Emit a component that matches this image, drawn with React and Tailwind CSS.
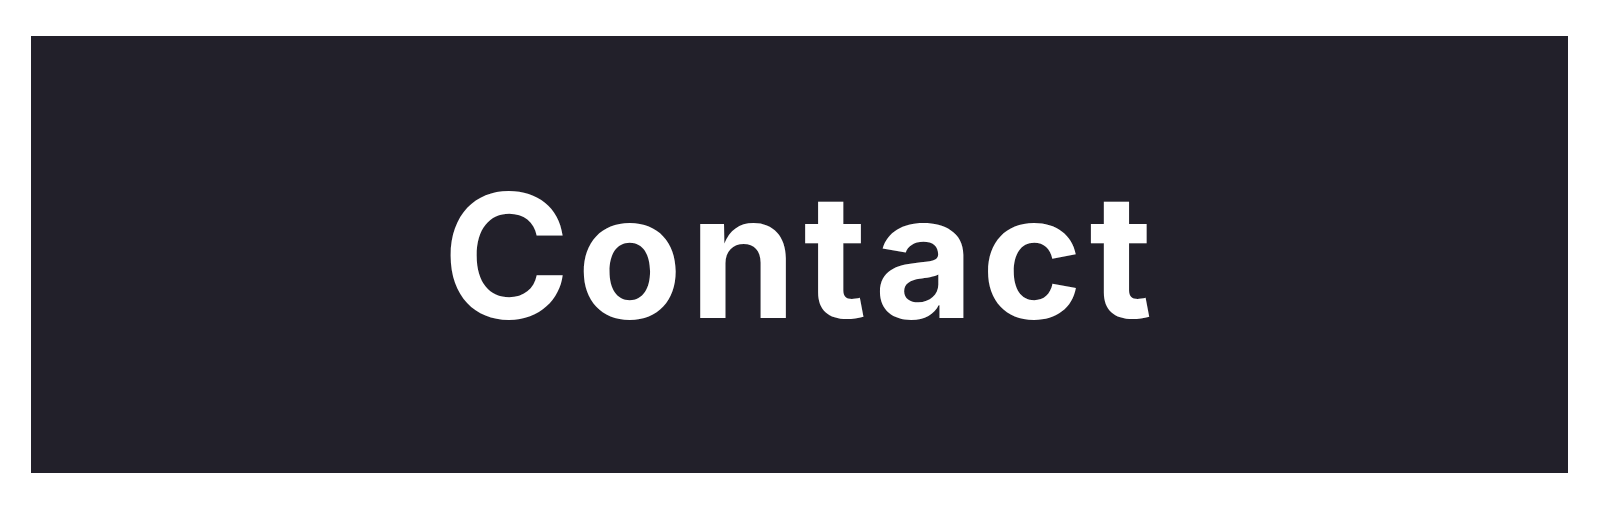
import React from 'react';

const App = () => {
  return (
    <div className="min-h-screen bg-white pl-[31px] pr-[32px] py-[36px]">
      <section className="flex h-[437px] items-center justify-center bg-[#22202a]">
        <h1
          className="pl-[3px] text-[172px] font-bold leading-none tracking-[7px] text-white"
          style={{ fontFamily: 'Inter, "Noto Sans", sans-serif' }}
        >
          Contact
        </h1>
      </section>
    </div>
  );
};

export default App;
